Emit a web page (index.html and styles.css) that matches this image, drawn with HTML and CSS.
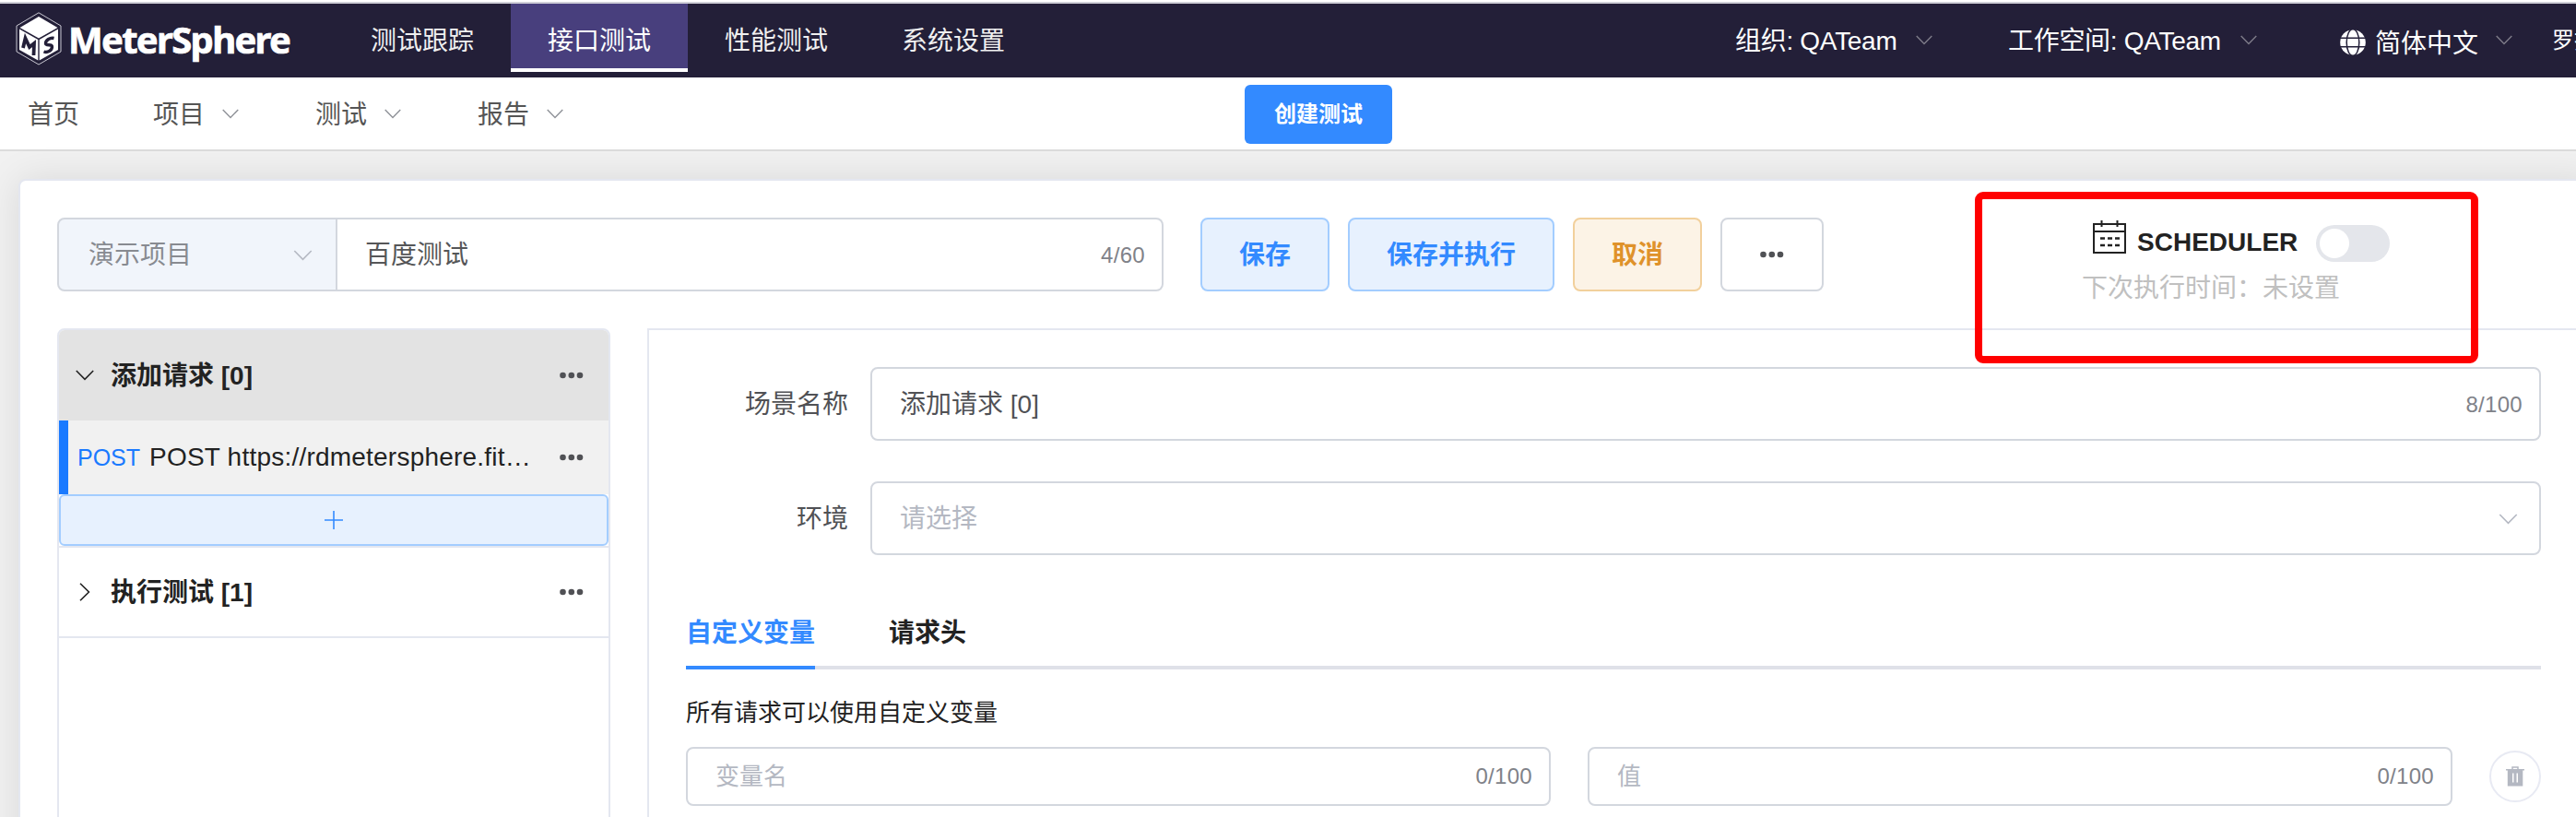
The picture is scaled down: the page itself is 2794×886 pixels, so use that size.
FILE: index.html
```html
<!DOCTYPE html>
<html lang="zh-CN">
<head>
<meta charset="utf-8">
<title>MeterSphere</title>
<link rel="stylesheet" href="styles.css">
</head>
<body>
<svg class="defs" width="0" height="0">
  <symbol id="down" viewBox="0 0 20 12"><path d="M.8 1 10 10.4 19.2 1" fill="none" stroke="currentColor" stroke-width="1.6"/></symbol>
  <symbol id="dots" viewBox="0 0 26 8"><circle cx="3.5" cy="4" r="3.3"/><circle cx="12.8" cy="4" r="3.3"/><circle cx="22" cy="4" r="3.3"/></symbol>
</svg>
<div class="page">
  <header class="topbar">
    <div class="brand">
      <svg class="cube" width="50" height="58" viewBox="0 0 50 58">
        <path d="M25 .8 49 15v28L25 57 1 43V15z" fill="none" stroke="#c9c8d2" stroke-width="1"/>
        <path d="M25 5 45.500 17 25 28.500 4.500 17z" fill="#fff"/>
        <path d="M4 18.500 24.300 30v22.500L4 41z M25.700 30 46 18.500V41L25.700 52.500z" fill="#fff"/>
        <path d="M8 39 10.500 28.500l4.500 9.500 5-4-.5 13" fill="none" stroke="#231f38" stroke-width="3.800"/>
        <path d="M41.500 28.500c-4-1-9 2-9 5.500s7.500 0 7 4-5 6.500-9 5" fill="none" stroke="#231f38" stroke-width="3.400"/>
      </svg>
      <span class="wordmark">MeterSphere</span>
    </div>
    <nav class="tabs-top">
      <a class="top-item">测试跟踪</a>
      <a class="top-item active">接口测试</a>
      <a class="top-item">性能测试</a>
      <a class="top-item">系统设置</a>
    </nav>
    <div class="account">
      <div class="acct org"><span>组织: QATeam</span><svg class="caret"><use href="#down"/></svg></div>
      <div class="acct space"><span>工作空间: QATeam</span><svg class="caret"><use href="#down"/></svg></div>
      <div class="acct lang">
        <svg class="globe" viewBox="0 0 28 28"><circle cx="14" cy="14" r="13.800" fill="#fff"/><g fill="none" stroke="#231f38" stroke-width="1.500"><ellipse cx="14" cy="14" rx="6.800" ry="14.500"/><path d="M0 9.300h28M0 18.700h28"/></g></svg>
        <span class="lang-name">简体中文</span><svg class="caret"><use href="#down"/></svg>
      </div>
      <span class="user">罗指</span>
    </div>
  </header>

  <div class="subbar">
    <nav class="menu">
      <a>首页</a>
      <a>项目<svg class="caret"><use href="#down"/></svg></a>
      <a>测试<svg class="caret"><use href="#down"/></svg></a>
      <a>报告<svg class="caret"><use href="#down"/></svg></a>
    </nav>
    <button class="create">创建测试</button>
  </div>

  <main class="card">
    <div class="toolbar">
      <div class="project"><span>演示项目</span><svg class="arrow"><use href="#down"/></svg></div>
      <div class="test-name"><span>百度测试</span><span class="count">4/60</span></div>
      <button class="btn primary">保存</button>
      <button class="btn primary">保存并执行</button>
      <button class="btn warning">取消</button>
      <button class="btn plain"><svg class="dots"><use href="#dots"/></svg></button>
      <div class="scheduler">
        <div class="sched-row">
          <svg class="calendar" viewBox="0 0 36 36"><g fill="none" stroke="#222" stroke-width="2"><path d="M1 4h34v31H1zM1 12h34M9.500 0v7M26.500 0v7"/><path d="M8 19.500h21M8 27h21" stroke-width="2.400" stroke-dasharray="5 3"/></g></svg>
          <b>SCHEDULER</b>
          <span class="switch"></span>
        </div>
        <div class="next-run">下次执行时间：未设置</div>
        <div class="highlight"></div>
      </div>
    </div>

    <div class="panels">
      <aside class="tree">
        <div class="scenario selected">
          <svg class="fold"><use href="#down"/></svg><b>添加请求 [0]</b><svg class="dots"><use href="#dots"/></svg>
        </div>
        <div class="request">
          <span class="method">POST</span><span class="url">POST https://rdmetersphere.fit…</span><svg class="dots"><use href="#dots"/></svg>
        </div>
        <button class="add"><svg width="20" height="20" viewBox="0 0 20 20"><path d="M0 10h20M10 0v20" stroke="#338aff" stroke-width="1.600"/></svg></button>
        <div class="scenario">
          <svg class="fold closed"><use href="#down"/></svg><b>执行测试 [1]</b><svg class="dots"><use href="#dots"/></svg>
        </div>
      </aside>

      <section class="detail">
        <div class="field"><label>场景名称</label><div class="input"><span>添加请求 [0]</span><span class="count">8/100</span></div></div>
        <div class="field"><label>环境</label><div class="input env"><span class="hint">请选择</span><svg class="arrow"><use href="#down"/></svg></div></div>
        <div class="tabs"><a class="tab on">自定义变量</a><a class="tab">请求头</a></div>
        <p class="note">所有请求可以使用自定义变量</p>
        <div class="variable">
          <div class="input small"><span class="hint">变量名</span><span class="count">0/100</span></div>
          <div class="input small"><span class="hint">值</span><span class="count">0/100</span></div>
          <button class="remove"><svg width="20" height="22" viewBox="0 0 20 22"><path d="M7 3.500V1h6v2.500" fill="none" stroke="#b4b8c2" stroke-width="1.500"/><path d="M0 3h20v1.500h-1.700V21.500H1.800V4.500H0zM7 7.500v10h1.500v-10zm4.500 0v10H13v-10z" fill="#b4b8c2" fill-rule="evenodd"/></svg></button>
        </div>
      </section>
    </div>
  </main>
</div>
</body>
</html>
```

FILE: styles.css
```css
* { box-sizing: border-box; }
body { margin: 0; background: #f1f1f1; font-family: "Liberation Sans", "Noto Sans CJK SC", sans-serif; font-size: 28px; line-height: 40px; color: #222; white-space: nowrap; }
button { margin: 0; padding: 0; font: inherit; }
svg { display: block; flex: none; }
.defs { position: absolute; }
.page { width: 2794px; height: 886px; overflow: hidden; display: flex; flex-direction: column; }

.topbar { height: 84px; flex: none; display: flex; background: #231f38; border-top: 2px solid #fff; box-shadow: inset 0 2px #d0d0d8; color: #fff; }
.topbar > * { flex: none; }
.brand { width: 362px; padding: 11px 0 0 17px; display: flex; }
.wordmark { margin: 10px 0 0 7px; font: bold 40px/40px "Noto Sans", sans-serif; letter-spacing: -1.7px; -webkit-text-stroke: .7px #fff; }
.tabs-top { display: flex; padding-top: 2px; }
.top-item { width: 192px; height: 74px; padding-top: 21px; text-align: center; color: #f0f0f0; }
.top-item.active { background: #483f7d; border-bottom: 4px solid #fff; color: #fff; }
.account { width: 912px; margin-left: 752px; display: flex; padding-top: 23px; }
.acct { display: flex; flex: none; }
.org { width: 296px; }
.space { width: 360px; }
.org span, .space span { letter-spacing: -.3px; }
.lang { width: 230px; }
.caret { width: 18px; height: 11px; color: #909399; margin: 13px 0 0 21px; }
.topbar .caret { color: #7d7b88; }
.globe { width: 28px; height: 28px; margin: 7px 10px 0 0; }
.lang-name { margin-top: 3px; }
.lang .caret { margin-left: 19px; }
.user { font-size: 24px; margin-top: -1px; }

.subbar { height: 80px; flex: none; display: flex; background: #fff; border-bottom: 2px solid #dcdcdc; }
.menu { width: 1350px; padding: 21px 0 0 30px; display: flex; color: #555; }
.menu a { display: flex; width: 176px; }
.menu a:first-child { width: 136px; }
.menu .caret { margin-left: 19px; margin-top: 13px; }
.create { width: 160px; height: 64px; margin-top: 8px; border: 0; border-radius: 6px; background: #338aff; color: #fff; font-size: 24px; font-weight: 600; }

.card { flex: 1; margin: 30px -20px 0 20px; padding: 40px 0 0 40px; background: #fff; border: 2px solid #e4e7f0; border-bottom: 0; border-radius: 8px 0 0; box-shadow: 0 0 40px rgba(0, 0, 0, .1); }
.toolbar { display: flex; height: 120px; }
.project { width: 304px; height: 80px; padding: 19px 25px 0 32px; display: flex; justify-content: space-between; background: #f1f5fb; border: 2px solid #d3d7de; border-radius: 8px 0 0 8px; color: #888b91; }
.arrow { width: 21px; height: 12px; color: #b4b8c2; margin-top: 14px; }
.test-name { width: 896px; height: 80px; margin-right: 40px; padding: 19px 18px 0 30px; display: flex; justify-content: space-between; border: 2px solid #d3d7de; border-left: 0; border-radius: 0 8px 8px 0; color: #555658; }
.count { font-size: 24px; letter-spacing: .3px; color: #808289; }
.btn { height: 80px; padding: 2px 40px 0; margin-right: 20px; border: 2px solid; border-radius: 8px; font-weight: 600; }
.primary { background: #e7f1fe; border-color: #a3cdff; color: #338aff; }
.warning { background: #fcf3e6; border-color: #f2d09c; color: #df922b; }
.plain { width: 112px; padding: 0 41px; border-color: #d3d7de; background: #fff; }
.dots { width: 26px; height: 8px; fill: #505155; }
.scheduler { position: relative; margin-left: 144px; width: 546px; height: 120px; padding: 3px 0 0 116px; }
.sched-row { display: flex; padding-left: 12px; }
.calendar { width: 36px; height: 36px; margin-right: 12px; }
.sched-row b { height: 40px; margin: 4px 20px 0 0; }
.switch { width: 80px; height: 40px; margin-top: 5px; padding: 4px; border-radius: 20px; background: #e4e6eb; }
.switch::before { content: ""; display: block; width: 32px; height: 32px; border-radius: 50%; background: #fff; }
.next-run { margin-top: 9px; color: #c0c0c0; }
.highlight { position: absolute; left: 0; top: -28px; width: 546px; height: 186px; border: 8px solid #f00; border-radius: 9px; }

.panels { display: flex; gap: 40px; height: 600px; }
.tree { width: 600px; flex: none; border: 2px solid #e4e7f0; border-radius: 8px 8px 0 0; }
.scenario { height: 98px; display: flex; align-items: center; padding: 0 27px 0 18px; border-bottom: 2px solid #e4e7f0; }
.scenario.selected { background: #e3e3e3; border: 0; border-radius: 6px 6px 0 0; }
.scenario b { flex: 1; font-weight: 600; padding-top: 1px; }
.fold { width: 20px; height: 12px; margin-right: 18px; }
.closed { transform: rotate(-90deg); }
.request { height: 80px; display: flex; align-items: center; padding: 0 27px 0 10px; border-left: 10px solid #1a7aff; background: #f1f1f1; }
.method { width: 78px; font-size: 25px; color: #1a7aff; }
.url { flex: 1; letter-spacing: .22px; }
.add { display: flex; align-items: center; justify-content: center; width: 596px; height: 56px; background: #e7f1fe; border: 2px solid #a3cdff; border-radius: 6px; }
.add + .scenario { height: 100px; border-top: 2px solid #e4e7f0; }

.detail { width: 2100px; padding: 40px 0 0 40px; border: 2px solid #e4e7f0; }
.field { width: 2012px; display: flex; margin-bottom: 44px; color: #505155; }
.field label { width: 176px; margin-right: 24px; padding-top: 21px; text-align: right; }
.input { flex: 1; height: 80px; padding: 19px 18px 0 30px; display: flex; justify-content: space-between; border: 2px solid #d3d7de; border-radius: 8px; color: #505155; }
.env { padding-right: 23px; }
.hint { color: #b4b8c2; }
.tabs { width: 2012px; height: 80px; display: flex; gap: 80px; border-bottom: 4px solid #dfe1e8; }
.tab { height: 80px; padding-top: 21px; font-weight: 600; }
.on { color: #338aff; border-bottom: 4px solid #338aff; }
.note { margin: 27px 0 17px; font-size: 26px; }
.variable { width: 2012px; display: flex; gap: 40px; font-size: 26px; }
.small { height: 64px; padding-top: 10px; }
.remove { display: flex; align-items: center; justify-content: center; width: 56px; height: 56px; border: 2px solid #e8eaf3; border-radius: 50%; background: #fff; margin-top: 4px; }
```
